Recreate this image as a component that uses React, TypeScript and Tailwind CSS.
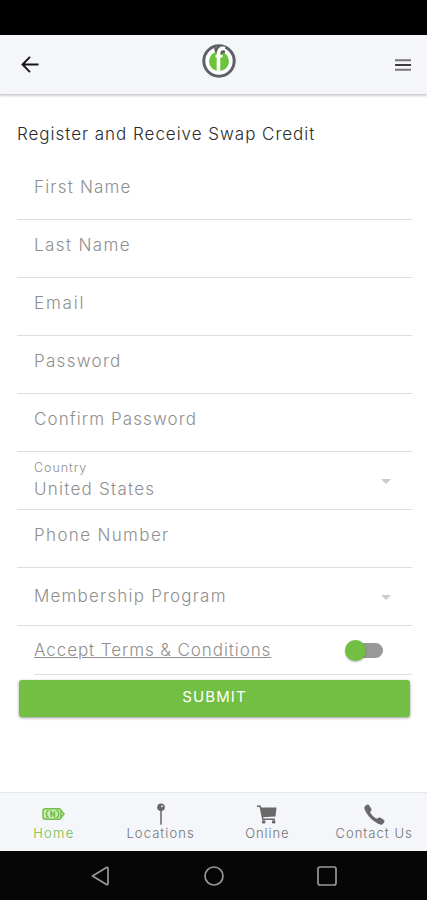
import type { ReactNode } from "react"
import { IoIosCall } from "react-icons/io"

interface Field {
  label: string
  tracking: string
}

const fields: Field[] = [
  { label: "First Name", tracking: "tracking-[1.2px]" },
  { label: "Last Name", tracking: "tracking-[1.4px]" },
  { label: "Email", tracking: "tracking-[1.8px]" },
  { label: "Password", tracking: "tracking-[1.3px]" },
  { label: "Confirm Password", tracking: "tracking-[1.1px]" },
]

function Caret() {
  return (
    <svg width="10" height="5" viewBox="0 0 10 5" fill="#cccccc">
      <path d="M0 0h10L5 5z" />
    </svg>
  )
}

function Row({ children }: { children: ReactNode }) {
  return (
    <div className="flex h-[58px] justify-between border-b border-[#dedede] pl-[17px] pr-[21px] text-[17px] leading-6 text-[#8f8f8f]">
      {children}
    </div>
  )
}

function Logo() {
  return (
    <svg width="34" height="34" viewBox="0 0 34 34" fill="none">
      <circle cx="17" cy="17" r="15.2" fill="#fff" stroke="#5d6066" strokeWidth="3" />
      <circle cx="17" cy="17.2" r="10" fill="#6cc43c" />
      <path d="M12 4.5 17.5 2 22 3.5 23 8.5 19 10 13 8z" fill="#5d6066" />
      <path d="M16.5 27.5V10c0-4.600 2-6.200 6.500-5.400" stroke="#fff" strokeWidth="3.600" />
      <path d="M13.5 12.200H20.500" stroke="#fff" strokeWidth="2.400" />
      <path d="M19.200 7.200h3.600v1.800l-3.600.4z" fill="#5d6066" />
    </svg>
  )
}

function BatteryIcon() {
  return (
    <svg width="23" height="12" viewBox="0 0 23 12" fill="none" stroke="#72bf44" strokeWidth="1.500">
      <rect x="1" y=".8" width="18" height="10.400" rx="2.500" fill="#cfeac0" />
      <path d="M19 2.500 22 6 19 9.500" />
      <path d="M6.500 2 4.500 4v4l2 2M14.500 2l2 2v4l-2 2" />
      <path d="M9 9V3.500l3.500 5V3" />
    </svg>
  )
}

function PinIcon() {
  return (
    <svg width="10" height="22" viewBox="0 0 10 22">
      <path d="M5 7v14" stroke="#777" strokeWidth="1.700" strokeLinecap="round" />
      <circle cx="5" cy="4.300" r="3.800" fill="#666" />
      <circle cx="6" cy="3.300" r="1.100" fill="#d7d9dd" />
    </svg>
  )
}

function CartIcon() {
  return (
    <svg width="20" height="19" viewBox="0 0 20 19" fill="none" stroke="#696969" strokeWidth="1.500">
      <path d="M0 1.200h3.200L5.800 14.200H18" />
      <path d="M3.500 2.500H19.500L18.500 11.500 5.500 12.300z" fill="#696969" stroke="none" />
      <rect x="5" y="15.300" width="3.400" height="3.200" rx="1.200" fill="#696969" stroke="none" />
      <rect x="15" y="15.300" width="3.400" height="3.200" rx="1.200" fill="#696969" stroke="none" />
    </svg>
  )
}

function Tab({ icon, label, className }: { icon: ReactNode; label: string; className: string }) {
  return (
    <a href="#" className={`flex flex-1 flex-col items-center pt-[10px] pl-px text-[13px] leading-4 ${className}`}>
      <span className="flex h-[22px] items-center justify-center">{icon}</span>
      <span className="whitespace-nowrap">{label}</span>
    </a>
  )
}

export default function App() {
  return (
    <div className="flex h-[900px] w-[427px] flex-col overflow-hidden bg-white font-['Inter',sans-serif] font-light">
      <div className="h-[35px] shrink-0 bg-black" />

      <header className="flex h-[60px] shrink-0 items-center justify-between border-b border-[#cfd1d4] bg-[#f4f6fa] pl-[21px] pr-4 shadow-[0_1px_2px_rgba(0,0,0,0.2)]">
        <svg width="18" height="17" viewBox="0 0 18 17" fill="none" stroke="#161616" strokeWidth="1.900">
          <path d="M9 .8 1.500 8.500 9 16.200M1.500 8.500H17.500" />
        </svg>
        <div className="mb-[7px] ml-1">
          <Logo />
        </div>
        <svg width="16" height="12" viewBox="0 0 16 12" fill="none" strokeWidth="1.900">
          <path d="M0 1.200h16M0 10.800h16" stroke="#777" />
          <path d="M0 6h16" stroke="#333" />
        </svg>
      </header>

      <main className="flex-1 pl-[17px] pr-[15px]">
        <h1 className="pt-[27px] text-[17px] leading-6 tracking-[0.97px] whitespace-nowrap text-[#2b2b2b]">
          Register and Receive Swap Credit
        </h1>

        <form className="mt-4">
          {fields.map((field) => (
            <Row key={field.label}>
              <label className={`pt-[13px] ${field.tracking}`}>{field.label}</label>
            </Row>
          ))}
          <Row>
            <div className="pt-2">
              <div className="text-[12.5px] leading-4 tracking-[0.95px]">Country</div>
              <div className="pt-px leading-6 tracking-[1.25px]">United States</div>
            </div>
            <div className="pt-[27px]">
              <Caret />
            </div>
          </Row>
          <Row>
            <label className="pt-[13px] tracking-[1.35px]">Phone Number</label>
          </Row>
          <Row>
            <label className="pt-4 tracking-[1.2px]">Membership Program</label>
            <div className="pt-[27px]">
              <Caret />
            </div>
          </Row>

          <div className="ml-[17px] flex h-[49px] items-center justify-between border-b border-[#dde0ea] pr-[29px] text-[17px] text-[#8f8f8f]">
            <a href="#" className="leading-6 tracking-[0.92px] underline underline-offset-1">
              Accept Terms &amp; Conditions
            </a>
            <div className="flex h-[15px] w-[37px] items-center rounded-full bg-[#999]">
              <span className="-ml-px size-[21px] rounded-full bg-[#72bf44] shadow-[0_1px_2px_rgba(0,0,0,0.3)]" />
            </div>
          </div>

          <button
            type="button"
            className="mt-[5px] ml-0.5 block h-[37px] w-[391px] rounded-[3px] bg-[#72bf44] pb-[3px] text-[15px] font-normal tracking-[1.1px] text-white shadow-[0_1px_3px_rgba(0,0,0,0.4)]"
          >
            SUBMIT
          </button>
        </form>
      </main>

      <nav className="flex h-[59px] shrink-0 border-t border-[#e6e8ec] bg-[#f4f6fa] text-[#737373]">
        <Tab icon={<BatteryIcon />} label="Home" className="tracking-[1.3px] text-[#72bf44]" />
        <Tab icon={<PinIcon />} label="Locations" className="tracking-[1.1px]" />
        <Tab icon={<CartIcon />} label="Online" className="tracking-[0.9px]" />
        <Tab icon={<IoIosCall size={27} color="#696969" />} label="Contact Us" className="tracking-[1.05px]" />
      </nav>

      <div className="flex h-[49px] shrink-0 items-center justify-between bg-[#060606] pr-[90px] pl-[91px]">
        <svg width="19" height="20" viewBox="0 0 19 20" fill="none" stroke="#999" strokeWidth="1.700" strokeLinejoin="round">
          <path d="M1.500 10 15.500 1.500q1.500-.6 1.500 1v15q0 1.600-1.500 1z" />
        </svg>
        <svg width="20" height="20" viewBox="0 0 20 20" fill="none" stroke="#999" strokeWidth="1.700">
          <circle cx="10" cy="10" r="9" />
        </svg>
        <svg width="20" height="20" viewBox="0 0 20 20" fill="none" stroke="#999" strokeWidth="1.700">
          <rect x="1" y="1" width="18" height="18" rx="2" />
        </svg>
      </div>
    </div>
  )
}
